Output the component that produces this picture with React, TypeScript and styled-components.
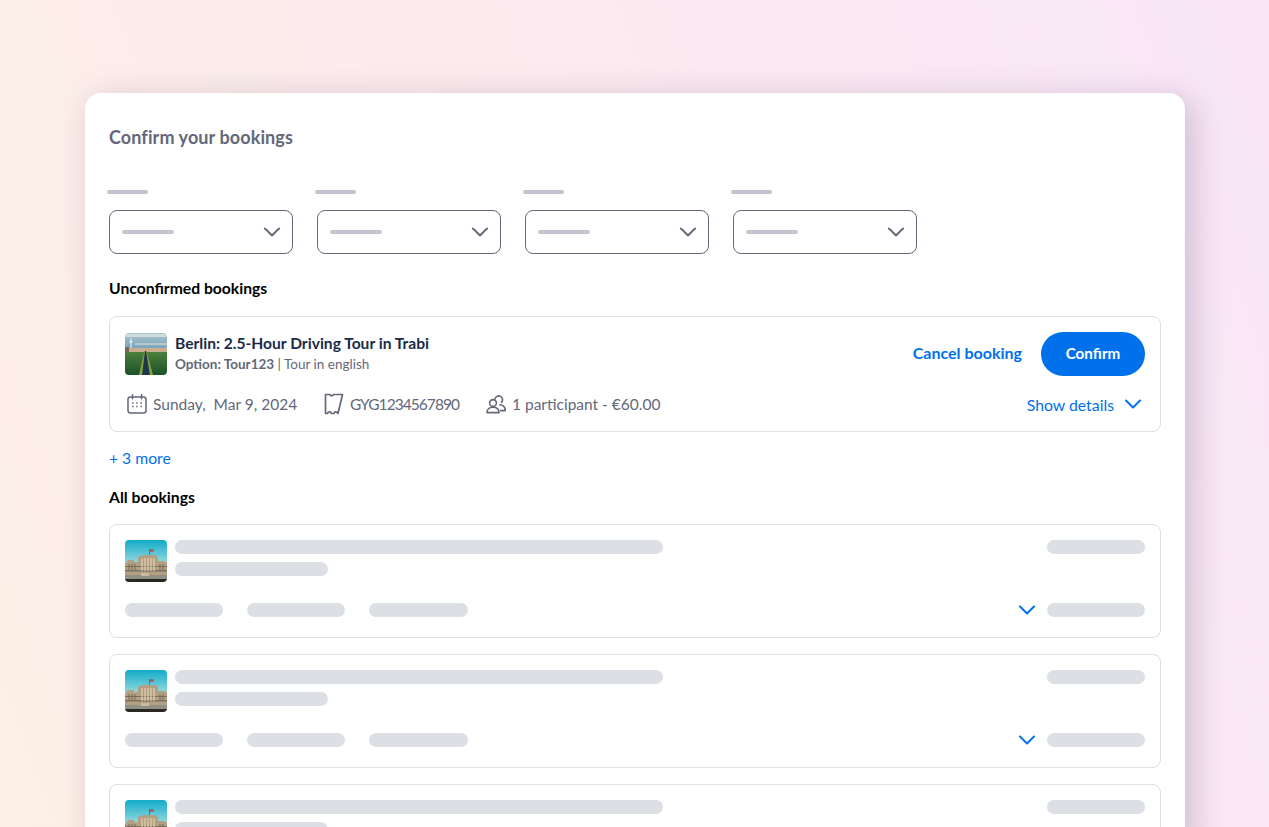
import * as React from "react";
import styled, { createGlobalStyle } from "styled-components";

const GlobalStyle = createGlobalStyle`
  html, body {
    margin: 0;
    padding: 0;
    height: 100%;
  }
  body {
    font-family: Lato, "Noto Sans", sans-serif;
    overflow: hidden;
  }
`;

const Chevron = ({ size = 16, color = "#0071eb", stroke = 2 }: { size?: number; color?: string; stroke?: number }) => (
  <svg width={size} height={size * 0.625} viewBox="0 0 16 10" fill="none">
    <path d="M1 1.5 L8 8.5 L15 1.5" stroke={color} strokeWidth={stroke} strokeLinecap="round" strokeLinejoin="round" />
  </svg>
);

const CalendarIcon = () => (
  <svg width="20" height="20" viewBox="0 0 20 20" fill="none" stroke="#63687a" strokeWidth="1.5">
    <rect x="1" y="3" width="18" height="16" rx="2.5" />
    <path d="M5.5 0.8v4M14.5 0.8v4" strokeLinecap="round" />
    <path d="M5 9h1.5M9.2 9h1.5M13.5 9h1.5M5 12.5h1.5M9.2 12.5h1.5M13.5 12.5h1.5" strokeWidth="1.6" />
  </svg>
);

const MapIcon = () => (
  <svg width="20" height="22" viewBox="0 0 20 22" fill="none" stroke="#63687a" strokeWidth="1.7" strokeLinejoin="round">
    <path d="M1.5 1.5 H6 C6.4 3.4 9 3.4 9.4 1.5 H18.5 L14 20.5 C13 18.2 10.5 18.2 9.8 20.5 H7.5 C6.8 18.4 4 18.4 3.4 20.5 H1.5 Z" />
  </svg>
);

const PeopleIcon = () => (
  <svg width="20" height="20" viewBox="0 0 20 20" fill="none" stroke="#63687a" strokeWidth="1.6" strokeLinejoin="round">
    <path d="M9 5.6 A3.8 3.8 0 1 1 15 8.8" />
    <circle cx="7" cy="9" r="3.4" />
    <path d="M1 18.6 C1 14.9 3.4 13.2 7 13.2 C10.6 13.2 13 14.9 13 18.6 Z" />
    <path d="M13.2 10.8 C17 10.8 19.2 13 19.2 16.6 H14" />
  </svg>
);

const TourThumb = () => (
  <svg width="42" height="42" viewBox="0 0 42 42">
    <defs>
      <linearGradient id="sky" x1="0" y1="0" x2="0" y2="1">
        <stop offset="0" stopColor="#a9c4cc" />
        <stop offset="1" stopColor="#7aa3bd" />
      </linearGradient>
      <linearGradient id="forest" x1="0" y1="0" x2="0" y2="1">
        <stop offset="0" stopColor="#4d7f3c" />
        <stop offset="1" stopColor="#1b5029" />
      </linearGradient>
    </defs>
    <rect width="42" height="16" fill="url(#sky)" />
    <rect x="0" y="1" width="42" height="3" fill="#dfe3de" opacity="0.8" />
    <rect x="10" y="10" width="32" height="2" fill="#d9d8d0" opacity="0.6" />
    <rect x="5.5" y="5" width="1" height="10" fill="#eef0ee" />
    <rect x="4.6" y="8" width="2.8" height="1.6" fill="#eef0ee" />
    <rect y="15" width="42" height="4" fill="#c9ad8d" />
    <rect x="0" y="14" width="4" height="5" fill="#6f6a5f" />
    <rect y="19" width="42" height="23" fill="url(#forest)" />
    <polygon points="19.5,18 21.5,18 28,42 14,42" fill="#8aa43c" />
    <polygon points="20,18 21,18 25,42 17,42" fill="#1c3850" />
  </svg>
);

const BuildingThumb = () => (
  <svg width="42" height="42" viewBox="0 0 42 42">
    <defs>
      <linearGradient id="teal" x1="0" y1="0" x2="0" y2="1">
        <stop offset="0" stopColor="#12abc9" />
        <stop offset="1" stopColor="#9bdbe0" />
      </linearGradient>
    </defs>
    <rect width="42" height="24" fill="url(#teal)" />
    <path d="M0 24 L3 20 H9 V22 H13 V17 L18 15 H30 L33 17 V21 H38 L42 22 V36 H0 Z" fill="#b3a083" />
    <path d="M0 26h42v1H0zM0 30h42v1.4H0z" fill="#5f584d" opacity="0.65" />
    <path d="M17 18v13M20 18v13M23 18v13M26 18v13M29 18v13" stroke="#e4d5b6" strokeWidth="1.1" />
    <path d="M4 24v6M7 24v6M10 24v6M35 24v6M38 24v6" stroke="#6d6557" strokeWidth="0.9" />
    <rect x="24" y="9" width="0.7" height="6" fill="#555" />
    <rect x="24.6" y="9.5" width="4" height="1" fill="#6a4a44" />
    <rect x="24.6" y="10.5" width="4" height="1.2" fill="#c9443a" />
    <rect y="35" width="42" height="4" fill="#8f9186" />
    <rect x="16" y="33" width="8" height="3" fill="#cbbb9c" />
    <rect y="39" width="42" height="3" fill="#2a2620" />
  </svg>
);

const Page = styled.div`
  height: 827px;
  overflow: hidden;
  box-sizing: border-box;
  padding: 93px 84px 0 85px;
  background: linear-gradient(70deg, #fdf0e6 0%, #fbeaee 50%, #f8e6f8 100%);
`;

const Panel = styled.main`
  background: #fff;
  border-radius: 16px;
  padding: 33px 24px 0;
  min-height: 900px;
  box-shadow: 8px 6px 32px rgba(60, 40, 80, 0.22);
`;

const Title = styled.h1`
  margin: 0;
  font-size: 18px;
  letter-spacing: 0.1px;
  line-height: 22px;
  font-weight: 700;
  color: #63687a;
`;

const Filters = styled.div`
  display: flex;
  gap: 24.15px;
  margin-top: 42px;
`;

const Filter = styled.div`
  width: 184px;
`;

const FilterLabel = styled.div`
  width: 41px;
  height: 4px;
  margin: 0 0 16px -2px;
  border-radius: 2px;
  background: #c1c4cf;
`;

const Select = styled.div`
  height: 44px;
  box-sizing: border-box;
  border: 1px solid #63687a;
  border-radius: 8px;
  padding: 0 12px;
  display: flex;
  align-items: center;
  justify-content: space-between;
`;

const SelectValue = styled.div`
  width: 52px;
  height: 4px;
  border-radius: 2px;
  background: #c1c4cf;
`;

const SectionTitle = styled.h2<{ $top: number }>`
  margin: ${(p) => p.$top}px 0 0;
  font-size: 15.7px;
  line-height: 18px;
  font-weight: 700;
  color: #000;
`;

const Card = styled.section`
  border: 1px solid #dcdfe4;
  border-radius: 8px;
  padding: 15px;
  box-sizing: border-box;
  background: #fff;
`;

const BookingCard = styled(Card)`
  height: 116px;
  margin-top: 19px;
`;

const Row = styled.div`
  display: flex;
  align-items: center;
`;

const Thumb = styled.div`
  width: 42px;
  height: 42px;
  flex: none;
  border-radius: 4px;
  overflow: hidden;
  margin-right: 8px;
  svg {
    display: block;
  }
`;

const Heading = styled.div`
  flex: 1;
  padding-bottom: 3px;
`;

const TourName = styled.div`
  font-size: 15.6px;
  line-height: 20px;
  font-weight: 700;
  color: #1a2b49;
`;

const TourOption = styled.div`
  font-size: 13.5px;
  line-height: 18px;
  margin-top: 2px;
  color: #63687a;
  b {
    font-weight: 700;
  }
`;

const TextAction = styled.a`
  font-size: 16px;
  font-weight: 700;
  color: #0071eb;
  margin-right: 19px;
  padding-bottom: 3px;
`;

const ConfirmButton = styled.button`
  width: 104px;
  height: 44px;
  border: 0;
  border-radius: 22px;
  padding: 0 0 2px;
  background: #0071eb;
  color: #fff;
  font: 700 15.2px Lato, sans-serif;
`;

const MetaRow = styled(Row)`
  margin-top: 16px;
  height: 24px;
  font-size: 15.5px;
  color: #63687a;
`;

const Meta = styled.div<{ $width: number; $tight?: boolean }>`
  width: ${(p) => p.$width}px;
  display: flex;
  align-items: center;
  gap: 6px;
  letter-spacing: ${(p) => (p.$tight ? "-0.95px" : "0")};
  svg {
    flex: none;
  }
`;

const Details = styled.a`
  margin-left: auto;
  margin-right: 4px;
  display: flex;
  align-items: center;
  gap: 11px;
  font-size: 15.8px;
  color: #0071eb;
`;

const MetaList = styled(Row)`
  padding-left: 2px;
`;

const More = styled.a`
  display: block;
  margin-top: 17px;
  font-size: 15.7px;
  line-height: 18px;
  color: #0071eb;
`;

const SkeletonCard = styled(Card)`
  height: 114px;
  margin-bottom: 16px;
`;

const SkeletonList = styled.div`
  margin-top: 18px;
`;

const Bar = styled.div<{ $width: number }>`
  width: ${(p) => p.$width}px;
  height: 14px;
  border-radius: 7px;
  background: #dcdfe4;
`;

const BarStack = styled.div`
  flex: 1;
  display: flex;
  flex-direction: column;
  gap: 8px;
  align-self: flex-start;
`;

const TopRow = styled(Row)`
  align-items: flex-start;
`;

const BottomRow = styled(Row)`
  margin-top: 21px;
  gap: 24px;
`;

const BottomBar = styled(Bar)`
  flex: none;
`;

const BottomEnd = styled.div`
  margin-left: auto;
  display: flex;
  align-items: center;
  gap: 12px;
`;

const FILTERS = [0, 1, 2, 3];

const SkeletonBooking = () => (
  <SkeletonCard>
    <TopRow>
      <Thumb>
        <BuildingThumb />
      </Thumb>
      <BarStack>
        <Bar $width={488} />
        <Bar $width={153} />
      </BarStack>
      <Bar $width={98} />
    </TopRow>
    <BottomRow>
      <BottomBar $width={98.2} />
      <BottomBar $width={98.2} />
      <BottomBar $width={98.2} />
      <BottomEnd>
        <Chevron />
        <Bar $width={98} />
      </BottomEnd>
    </BottomRow>
  </SkeletonCard>
);

export default function App() {
  return (
    <Page>
      <GlobalStyle />
      <Panel>
        <Title>Confirm your bookings</Title>
        <Filters>
          {FILTERS.map((f) => (
            <Filter key={f}>
              <FilterLabel />
              <Select>
                <SelectValue />
                <Chevron color="#63687a" />
              </Select>
            </Filter>
          ))}
        </Filters>

        <SectionTitle $top={25}>Unconfirmed bookings</SectionTitle>
        <BookingCard>
          <Row>
            <Thumb>
              <TourThumb />
            </Thumb>
            <Heading>
              <TourName>Berlin: 2.5-Hour Driving Tour in Trabi</TourName>
              <TourOption>
                <b>Option: Tour123</b> | Tour in english
              </TourOption>
            </Heading>
            <TextAction>Cancel booking</TextAction>
            <ConfirmButton>Confirm</ConfirmButton>
          </Row>
          <MetaRow>
            <MetaList>
              <Meta $width={197}>
                <CalendarIcon />
                Sunday,&nbsp; Mar 9, 2024
              </Meta>
              <Meta $width={162} $tight>
                <MapIcon />
                GYG1234567890
              </Meta>
              <Meta $width={260}>
                <PeopleIcon />
                1 participant - €60.00
              </Meta>
            </MetaList>
            <Details>
              Show details
              <Chevron />
            </Details>
          </MetaRow>
        </BookingCard>

        <More>+ 3 more</More>
        <SectionTitle $top={21}>All bookings</SectionTitle>
        <SkeletonList>
          <SkeletonBooking />
          <SkeletonBooking />
          <SkeletonBooking />
        </SkeletonList>
      </Panel>
    </Page>
  );
}
